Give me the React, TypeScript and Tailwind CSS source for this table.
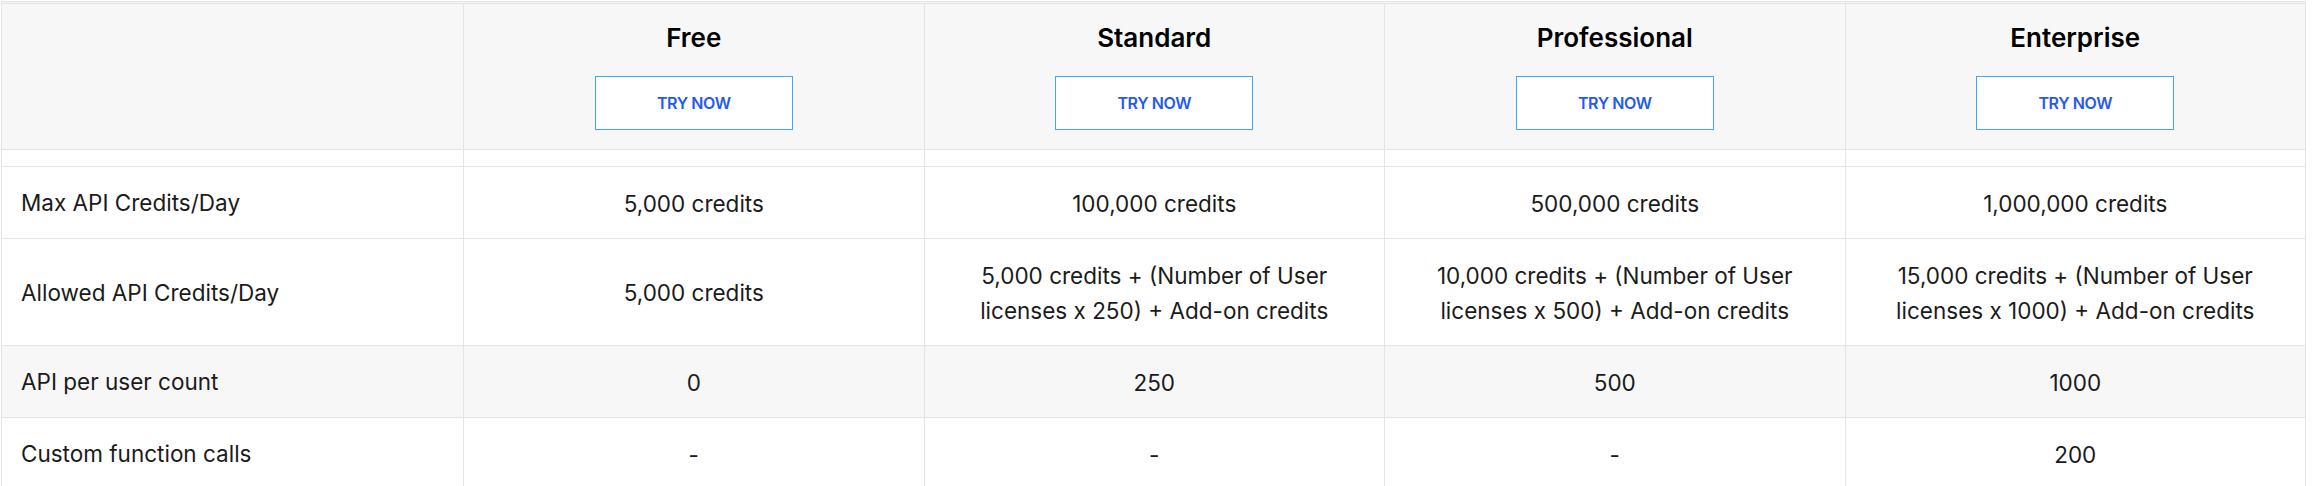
const PLANS = ["Free", "Standard", "Professional", "Enterprise"];

type Row = { label: string; values: string[]; tall?: boolean; shaded?: boolean };

const ROWS: Row[] = [
  {
    label: "Max API Credits/Day",
    values: ["5,000 credits", "100,000 credits", "500,000 credits", "1,000,000 credits"],
  },
  {
    label: "Allowed API Credits/Day",
    tall: true,
    values: [
      "5,000 credits",
      "5,000 credits + (Number of User licenses x 250) + Add-on credits",
      "10,000 credits + (Number of User licenses x 500) + Add-on credits",
      "15,000 credits + (Number of User licenses x 1000) + Add-on credits",
    ],
  },
  { label: "API per user count", shaded: true, values: ["0", "250", "500", "1000"] },
  { label: "Custom function calls", values: ["-", "-", "-", "200"] },
];

export default function App() {
  return (
    <div
      className="w-[2312px] h-[486px] overflow-hidden bg-white pt-px"
      style={{ fontFamily: "Inter, 'Open Sans', sans-serif" }}
    >
      <div className="ml-px w-[2305px] h-[2px] border-t border-x border-[#e4e4e4] bg-[#f7f7f7]" />
      <div className="ml-px w-[2305px] grid grid-cols-[461px_1fr_1fr_1fr_1fr] gap-px bg-[#e4e4e4] border border-[#e4e4e4]">
        {/* header */}
        <div className="bg-[#f7f7f7] h-[145px]" />
        {PLANS.map((plan) => (
          <div key={plan} className="bg-[#f7f7f7] h-[145px] flex flex-col items-center pt-[19px]">
            <div className="h-[30px] leading-[30px] text-[26px] font-semibold text-black">{plan}</div>
            <button className="mt-[23px] w-[198px] h-[54px] bg-white border border-[#42a5f5] text-[16px] font-semibold text-[#2458f0] tracking-tight">
              TRY NOW
            </button>
          </div>
        ))}

        {/* spacer row */}
        {[0, 1, 2, 3, 4].map((i) => (
          <div key={i} className="bg-white h-[16px]" />
        ))}

        {ROWS.map((row) => {
          const bg = row.shaded ? "bg-[#f7f7f7]" : "bg-white";
          const h = row.tall ? "h-[106px]" : "h-[71px]";
          return [
            <div
              key={row.label}
              className={`${bg} ${h} flex items-center pl-[19px] pt-px text-[22.5px] text-[#1b1b1b]`}
            >
              {row.label}
            </div>,
            ...row.values.map((v, i) => (
              <div
                key={row.label + i}
                className={`${bg} ${h} flex items-center justify-center px-[48px] pt-px text-center text-[22.5px] leading-[35px] text-[#1b1b1b]`}
              >
                {v}
              </div>
            )),
          ];
        })}
      </div>
    </div>
  );
}
